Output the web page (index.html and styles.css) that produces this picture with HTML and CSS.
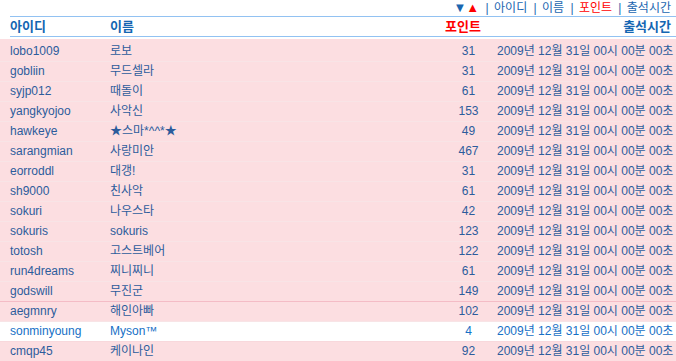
FILE: index.html
```html
<!DOCTYPE html>
<html lang="ko">
<head>
<meta charset="utf-8">
<title>출석부</title>
<link rel="stylesheet" href="styles.css">
</head>
<body>
<div class="page">
  <div class="sortbar">
    <span class="arr down">▼</span><span class="arr up">▲</span>
    <span class="sep">|</span> <a class="lnk">아이디</a>
    <span class="sep">|</span> <a class="lnk">이름</a>
    <span class="sep">|</span> <a class="lnk active">포인트</a>
    <span class="sep">|</span> <a class="lnk">출석시간</a>
  </div>
  <div class="head">
    <div class="c-id">아이디</div>
    <div class="c-name">이름</div>
    <div class="c-pt active">포인트</div>
    <div class="c-date">출석시간</div>
  </div>
  <div class="list">
    <div class="row"><div class="c-id">lobo1009</div><div class="c-name">로보</div><div class="c-pt">31</div><div class="c-date">2009년 12월 31일 00시 00분 00초</div></div>
    <div class="row"><div class="c-id">gobliin</div><div class="c-name">무드셀라</div><div class="c-pt">31</div><div class="c-date">2009년 12월 31일 00시 00분 00초</div></div>
    <div class="row"><div class="c-id">syjp012</div><div class="c-name">때돌이</div><div class="c-pt">61</div><div class="c-date">2009년 12월 31일 00시 00분 00초</div></div>
    <div class="row"><div class="c-id">yangkyojoo</div><div class="c-name">사악신</div><div class="c-pt">153</div><div class="c-date">2009년 12월 31일 00시 00분 00초</div></div>
    <div class="row"><div class="c-id">hawkeye</div><div class="c-name">★스마*^^*★</div><div class="c-pt">49</div><div class="c-date">2009년 12월 31일 00시 00분 00초</div></div>
    <div class="row"><div class="c-id">sarangmian</div><div class="c-name">사랑미안</div><div class="c-pt">467</div><div class="c-date">2009년 12월 31일 00시 00분 00초</div></div>
    <div class="row"><div class="c-id">eorroddl</div><div class="c-name">대갱!</div><div class="c-pt">31</div><div class="c-date">2009년 12월 31일 00시 00분 00초</div></div>
    <div class="row"><div class="c-id">sh9000</div><div class="c-name">친사악</div><div class="c-pt">61</div><div class="c-date">2009년 12월 31일 00시 00분 00초</div></div>
    <div class="row"><div class="c-id">sokuri</div><div class="c-name">나우스타</div><div class="c-pt">42</div><div class="c-date">2009년 12월 31일 00시 00분 00초</div></div>
    <div class="row"><div class="c-id">sokuris</div><div class="c-name">sokuris</div><div class="c-pt">123</div><div class="c-date">2009년 12월 31일 00시 00분 00초</div></div>
    <div class="row"><div class="c-id">totosh</div><div class="c-name">고스트베어</div><div class="c-pt">122</div><div class="c-date">2009년 12월 31일 00시 00분 00초</div></div>
    <div class="row"><div class="c-id">run4dreams</div><div class="c-name">찌니찌니</div><div class="c-pt">61</div><div class="c-date">2009년 12월 31일 00시 00분 00초</div></div>
    <div class="row row-strong"><div class="c-id">godswill</div><div class="c-name">무진군</div><div class="c-pt">149</div><div class="c-date">2009년 12월 31일 00시 00분 00초</div></div>
    <div class="row"><div class="c-id">aegmnry</div><div class="c-name">해인아빠</div><div class="c-pt">102</div><div class="c-date">2009년 12월 31일 00시 00분 00초</div></div>
    <div class="row row-me"><div class="c-id">sonminyoung</div><div class="c-name">Myson™</div><div class="c-pt">4</div><div class="c-date">2009년 12월 31일 00시 00분 00초</div></div>
    <div class="row"><div class="c-id">cmqp45</div><div class="c-name">케이나인</div><div class="c-pt">92</div><div class="c-date">2009년 12월 31일 00시 00분 00초</div></div>
  </div>
</div>
</body>
</html>
```
FILE: styles.css
```css
html, body {
  margin: 0;
  padding: 0;
  background: #ffffff;
}
body {
  font-family: "Liberation Sans", "Noto Sans CJK KR", sans-serif;
  font-size: 12px;
  color: #2c5c9c;
}
.page {
  width: 676px;
}
.sortbar {
  height: 16px;
  line-height: 15px;
  text-align: right;
  padding-right: 5px;
  color: #1a66b0;
  white-space: nowrap;
}
.sortbar .arr {
  font-size: 13px;
}
.sortbar .down { color: #1a66b0; }
.sortbar .up { color: #ff0000; }
.sortbar .sep { color: #1a66b0; margin: 0 2px 0 3px; }
.sortbar .lnk { color: #1a66b0; text-decoration: none; }
.sortbar .lnk.active { color: #ff0000; }

.head {
  margin-left: 10px;
  height: 19px;
  border-top: 1px solid #92c2f2;
  border-bottom: 1px solid #92c2f2;
  display: grid;
  grid-template-columns: 100px 1fr 57px 174px;
  padding-right: 5px;
  align-items: center;
  font-weight: bold;
  font-size: 13px;
  color: #1466b2;
  line-height: 19px;
}
.head .c-pt {
  text-align: right;
  padding-right: 16px;
  margin-left: -40px;
}
.head .active {
  color: #ff0000;
}
.list {
  margin-top: 2px;
  padding-top: 3px;
  background: #fcdee1;
}
.row {
  display: grid;
  grid-template-columns: 100px 1fr 57px 174px;
  padding: 0 5px 0 10px;
  height: 19px;
  line-height: 19px;
  border-bottom: 1px solid #f8e4e6;
  background: #fcdee1;
  white-space: nowrap;
}
.row-strong {
  border-bottom-color: #f4bcc6;
}
.row-me {
  background: #ffffff;
  color: #1670c6;
  border-bottom-color: #f8d8dc;
}
.c-pt {
  text-align: center;
}
.c-date {
  text-align: right;
}
```
